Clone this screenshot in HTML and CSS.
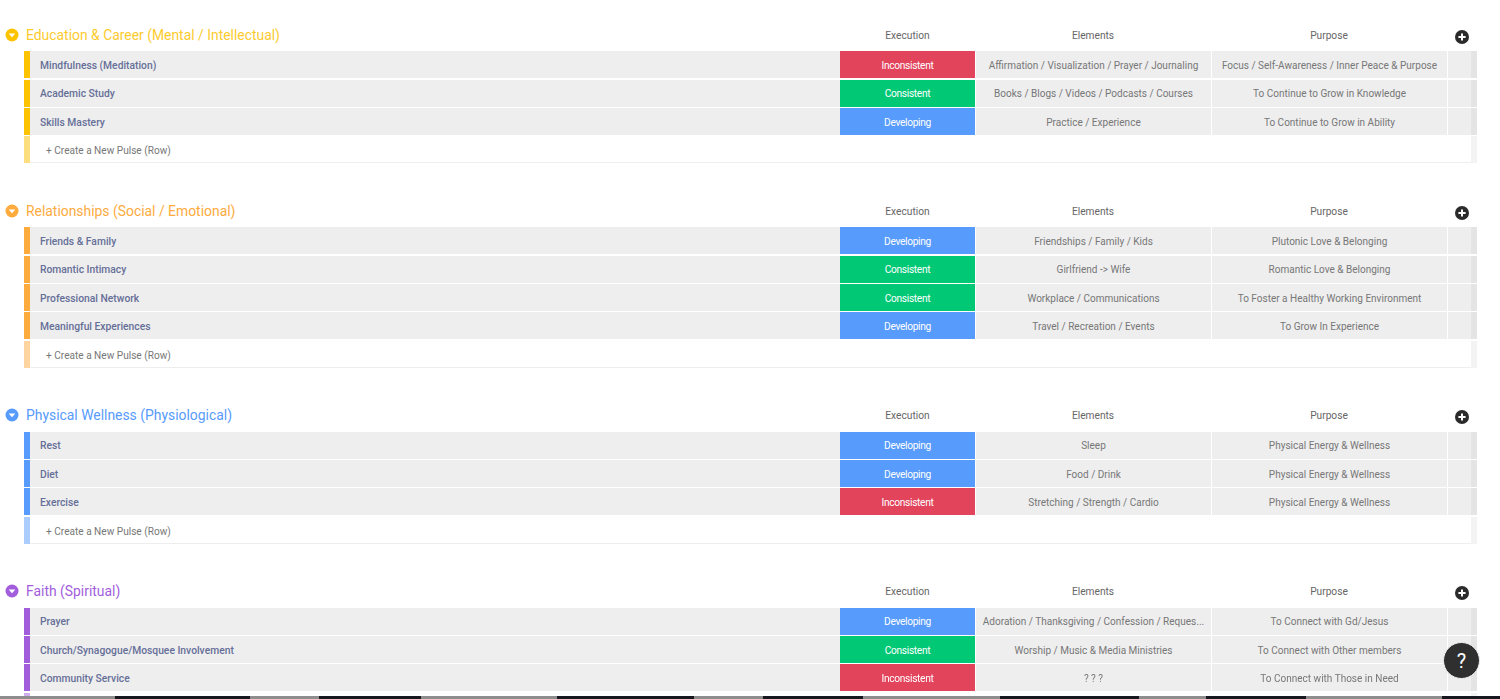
FILE: index.html
```html
<!DOCTYPE html>
<html lang="en">
<head>
<meta charset="utf-8">
<title>Life Board</title>
<link rel="stylesheet" href="styles.css">
</head>
<body>
<div class="app">
  <main class="card">
    <section class="group yellow">
      <header class="head">
        <span class="toggle"><svg viewBox="0 0 14 14"><circle cx="7" cy="7" r="6.5"/><path class="tri" d="M3.7 5.6h6.6L7 9.2z"/></svg></span>
        <h2 class="title">Education &amp; Career (Mental / Intellectual)</h2>
        <span class="col">Execution</span><span class="col">Elements</span><span class="col">Purpose</span>
        <span class="add"><svg viewBox="0 0 14 14"><circle cx="7" cy="7" r="7"/><path class="plus" d="M7 3.4v7.2M3.4 7h7.2"/></svg></span>
      </header>
      <div class="row"><i class="bar"></i><b class="name">Mindfulness (Meditation)</b><span class="status red">Inconsistent</span><span class="cell">Affirmation / Visualization / Prayer / Journaling</span><span class="cell">Focus / Self-Awareness / Inner Peace &amp; Purpose</span><i class="cell"></i><i class="edge"></i></div>
      <div class="row"><i class="bar"></i><b class="name">Academic Study</b><span class="status green">Consistent</span><span class="cell">Books / Blogs / Videos / Podcasts / Courses</span><span class="cell">To Continue to Grow in Knowledge</span><i class="cell"></i><i class="edge"></i></div>
      <div class="row"><i class="bar"></i><b class="name">Skills Mastery</b><span class="status blue">Developing</span><span class="cell">Practice / Experience</span><span class="cell">To Continue to Grow in Ability</span><i class="cell"></i><i class="edge"></i></div>
      <div class="new"><i class="bar"></i><span class="create">+ Create a New Pulse (Row)</span><i class="edge"></i></div>
    </section>

    <section class="group orange">
      <header class="head">
        <span class="toggle"><svg viewBox="0 0 14 14"><circle cx="7" cy="7" r="6.5"/><path class="tri" d="M3.7 5.6h6.6L7 9.2z"/></svg></span>
        <h2 class="title">Relationships (Social / Emotional)</h2>
        <span class="col">Execution</span><span class="col">Elements</span><span class="col">Purpose</span>
        <span class="add"><svg viewBox="0 0 14 14"><circle cx="7" cy="7" r="7"/><path class="plus" d="M7 3.4v7.2M3.4 7h7.2"/></svg></span>
      </header>
      <div class="row"><i class="bar"></i><b class="name">Friends &amp; Family</b><span class="status blue">Developing</span><span class="cell">Friendships / Family / Kids</span><span class="cell">Plutonic Love &amp; Belonging</span><i class="cell"></i><i class="edge"></i></div>
      <div class="row"><i class="bar"></i><b class="name">Romantic Intimacy</b><span class="status green">Consistent</span><span class="cell">Girlfriend -&gt; Wife</span><span class="cell">Romantic Love &amp; Belonging</span><i class="cell"></i><i class="edge"></i></div>
      <div class="row"><i class="bar"></i><b class="name">Professional Network</b><span class="status green">Consistent</span><span class="cell">Workplace / Communications</span><span class="cell">To Foster a Healthy Working Environment</span><i class="cell"></i><i class="edge"></i></div>
      <div class="row"><i class="bar"></i><b class="name">Meaningful Experiences</b><span class="status blue">Developing</span><span class="cell">Travel / Recreation / Events</span><span class="cell">To Grow In Experience</span><i class="cell"></i><i class="edge"></i></div>
      <div class="new"><i class="bar"></i><span class="create">+ Create a New Pulse (Row)</span><i class="edge"></i></div>
    </section>

    <section class="group sky">
      <header class="head">
        <span class="toggle"><svg viewBox="0 0 14 14"><circle cx="7" cy="7" r="6.5"/><path class="tri" d="M3.7 5.6h6.6L7 9.2z"/></svg></span>
        <h2 class="title">Physical Wellness (Physiological)</h2>
        <span class="col">Execution</span><span class="col">Elements</span><span class="col">Purpose</span>
        <span class="add"><svg viewBox="0 0 14 14"><circle cx="7" cy="7" r="7"/><path class="plus" d="M7 3.4v7.2M3.4 7h7.2"/></svg></span>
      </header>
      <div class="row"><i class="bar"></i><b class="name">Rest</b><span class="status blue">Developing</span><span class="cell">Sleep</span><span class="cell">Physical Energy &amp; Wellness</span><i class="cell"></i><i class="edge"></i></div>
      <div class="row"><i class="bar"></i><b class="name">Diet</b><span class="status blue">Developing</span><span class="cell">Food / Drink</span><span class="cell">Physical Energy &amp; Wellness</span><i class="cell"></i><i class="edge"></i></div>
      <div class="row"><i class="bar"></i><b class="name">Exercise</b><span class="status red">Inconsistent</span><span class="cell">Stretching / Strength / Cardio</span><span class="cell">Physical Energy &amp; Wellness</span><i class="cell"></i><i class="edge"></i></div>
      <div class="new"><i class="bar"></i><span class="create">+ Create a New Pulse (Row)</span><i class="edge"></i></div>
    </section>

    <section class="group purple">
      <header class="head">
        <span class="toggle"><svg viewBox="0 0 14 14"><circle cx="7" cy="7" r="6.5"/><path class="tri" d="M3.7 5.6h6.6L7 9.2z"/></svg></span>
        <h2 class="title">Faith (Spiritual)</h2>
        <span class="col">Execution</span><span class="col">Elements</span><span class="col">Purpose</span>
        <span class="add"><svg viewBox="0 0 14 14"><circle cx="7" cy="7" r="7"/><path class="plus" d="M7 3.4v7.2M3.4 7h7.2"/></svg></span>
      </header>
      <div class="row"><i class="bar"></i><b class="name">Prayer</b><span class="status blue">Developing</span><span class="cell">Adoration / Thanksgiving / Confession / Reques...</span><span class="cell">To Connect with Gd/Jesus</span><i class="cell"></i><i class="edge"></i></div>
      <div class="row"><i class="bar"></i><b class="name">Church/Synagogue/Mosquee Involvement</b><span class="status green">Consistent</span><span class="cell">Worship / Music &amp; Media Ministries</span><span class="cell">To Connect with Other members</span><i class="cell"></i><i class="edge"></i></div>
      <div class="row"><i class="bar"></i><b class="name">Community Service</b><span class="status red">Inconsistent</span><span class="cell">? ? ?</span><span class="cell">To Connect with Those in Need</span><i class="cell"></i><i class="edge"></i></div>
      <div class="new"><i class="bar"></i><span class="create"></span><i class="edge"></i></div>
    </section>

    <button class="help" type="button">?</button>
  </main>
  <div class="strip">
    <i class="g s115"></i><i class="d s135"></i><i class="g s69"></i><i class="d s102"></i><i class="g s136"></i><i class="d s137"></i><i class="g s69"></i><i class="d s100"></i><i class="g s137"></i><i class="d s139"></i><i class="g s67"></i><i class="d s100"></i><i class="g s136"></i><i class="d s58"></i>
  </div>
</div>
</body>
</html>
```
FILE: styles.css
```css
* { box-sizing: border-box; }
html, body { margin: 0; height: 100%; overflow: hidden; background: #fff; }
body { font-family: Roboto, "Open Sans", sans-serif; color: #666; }

.app { height: 699px; display: flex; flex-direction: column; filter: blur(0.45px); }
.card {
  position: relative;
  flex: 1;
  min-height: 0;
  overflow: hidden;
  background: #fff;
  padding-top: 18px;
  border-radius: 0 0 6px 6px;
}

.yellow { --c: #fdc300; --l: #fedf7f; --t: #fdcb2e; }
.orange { --c: #fdab3d; --l: #fed5a0; --t: #fdab3d; }
.sky    { --c: #579bfc; --l: #abcdfd; --t: #579bfc; }
.purple { --c: #a25ddc; --l: #d0aeed; --t: #a25ddc; }

.group { margin-bottom: 30.7px; }

.head, .row, .new {
  display: grid;
  grid-template-columns: 24px 6px 810px 135px 236px 236px 1fr 6px 23px;
}

.head {
  height: 33.3px;
  align-items: start;
  grid-template-columns: 26px 814px 135px 236px 236px 1fr 23px;
}
.toggle { width: 14px; height: 14px; margin: 10px 0 0 5px; }
.toggle svg, .add svg { display: block; width: 14px; height: 14px; }
.toggle circle { fill: var(--c); }
.tri { fill: #fff; }
.title {
  margin: 0;
  font-size: 13.9px;
  font-weight: 400;
  line-height: 35px;
  color: var(--t);
}
.col {
  font-size: 10.2px;
  line-height: 36px;
  text-align: center;
  color: #666;
}
.add { width: 14px; height: 14px; margin: 12px 0 0 8px; }
.add circle { fill: #2b2b2b; }
.plus { stroke: #fff; stroke-width: 2; fill: none; }

.row { height: 27px; margin-bottom: 1.33px; }
.bar { grid-column: 2; background: var(--c); }
.name {
  display: flex;
  align-items: center;
  padding: 1.6px 0 0 10px;
  background: #eee;
  font-size: 10.3px;
  font-weight: 500;
  color: #666f98;
  white-space: nowrap;
  overflow: hidden;
}
.status, .cell {
  display: flex;
  align-items: center;
  justify-content: center;
  padding-top: 1.6px;
  white-space: nowrap;
}
.status { color: #fff; font-size: 10.2px; letter-spacing: -0.32px; }
.cell { font-size: 10.03px; background: #eee; color: #777; margin-left: 1px; font-style: normal; }
.red { background: #e2445c; }
.green { background: #00c875; }
.blue { background: #579bfc; }
.edge { background: #e4e4e4; grid-column: 8; }

.new { height: 27px; margin-bottom: 0; }
.new .bar { background: var(--l); }
.create {
  grid-column: 3 / 8;
  display: flex;
  align-items: center;
  padding: 3px 0 0 16px;
  border-bottom: 1px solid #eee;
  font-size: 10.1px;
  color: #777;
}
.new .edge { background: #f3f3f3; }

.help {
  position: absolute;
  left: 1443px;
  top: 642px;
  width: 37px;
  height: 37px;
  padding: 0;
  border: 1.5px solid #f1f1f1;
  border-radius: 50%;
  background: #2f2f2f;
  color: #fff;
  font: 400 20px/34px Roboto, sans-serif;
  text-align: center;
}

.strip { height: 3px; display: flex; background: #888; }
.strip .d { background: #17171f; }
.strip .g { background: #8e8e8e; }
.s58 { width: 58px; } .s67 { width: 67px; } .s69 { width: 69px; }
.s100 { width: 100px; } .s102 { width: 102px; } .s115 { width: 115px; }
.s135 { width: 135px; } .s136 { width: 136px; } .s137 { width: 137px; } .s139 { width: 139px; }
```
